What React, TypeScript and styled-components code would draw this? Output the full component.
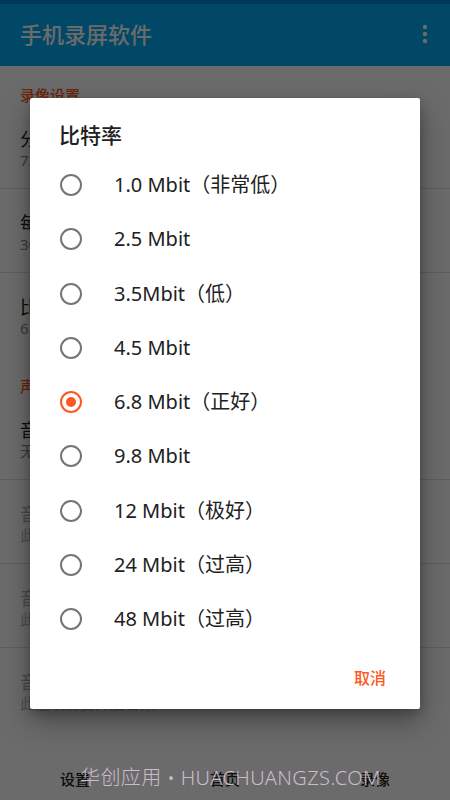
import React from "react";
import styled, { createGlobalStyle } from "styled-components";

const ACCENT = "#FF5722";
const FONT = '"Noto Sans", "Noto Sans CJK SC", sans-serif';

const GlobalStyle = createGlobalStyle`
  html, body { margin: 0; padding: 0; background: #fff; }
  body { font-family: ${FONT}; -webkit-font-smoothing: antialiased; }
  * { box-sizing: border-box; }
`;

const Screen = styled.div`
  position: relative;
  width: 450px;
  height: 800px;
  overflow: hidden;
  display: flex;
  flex-direction: column;
  background: #fff;
`;

const StatusBar = styled.div`
  height: 4px;
  flex: none;
  background: #0288d1;
`;

const AppBar = styled.header`
  height: 62px;
  flex: none;
  background: #03a9f4;
  display: flex;
  align-items: center;
  justify-content: space-between;
  padding: 0 16px 0 20px;
`;

const AppTitle = styled.h1`
  margin: 0;
  font-size: 22px;
  font-weight: 500;
  line-height: 28px;
  color: #fff;
  margin-top: -2px;
`;

const MoreButton = styled.div`
  width: 18px;
  height: 24px;
  display: flex;
  align-items: center;
  justify-content: center;
  margin-top: -3px;
`;

const Content = styled.main`
  flex: 1;
  overflow: hidden;
  display: flex;
  flex-direction: column;
`;

const SectionHeader = styled.div`
  height: 39px;
  flex: none;
  padding: 19px 20px 0;
  font-size: 15px;
  line-height: 20px;
  font-weight: 500;
  color: ${ACCENT};
`;

const Row = styled.div<{ $last?: boolean }>`
  height: 84px;
  flex: none;
  padding: 23px 20px 0;
  border-bottom: ${(p) => (p.$last ? "none" : "1px solid #e0e0e0")};
  display: flex;
  flex-direction: column;
`;

const RowTitle = styled.div<{ $disabled?: boolean }>`
  font-size: 18px;
  line-height: 22px;
  color: ${(p) => (p.$disabled ? "#b0b0b0" : "#212121")};
`;

const RowSub = styled.div<{ $disabled?: boolean }>`
  font-size: 15px;
  line-height: 20px;
  color: ${(p) => (p.$disabled ? "#b8b8b8" : "#8a8a8a")};
`;

const BottomNav = styled.nav`
  height: 48px;
  flex: none;
  padding-top: 6px;
  display: grid;
  grid-template-columns: repeat(3, 1fr);
  align-items: center;
  background: #fff;
`;

const NavItem = styled.div`
  text-align: center;
  font-size: 15px;
  line-height: 20px;
  font-weight: 500;
  color: #222;
`;

const Scrim = styled.div`
  position: absolute;
  inset: 0;
  background: rgba(0, 0, 0, 0.58);
  display: flex;
  align-items: flex-start;
  justify-content: center;
  padding-top: 98px;
`;

const Dialog = styled.div`
  width: 390px;
  background: #fff;
  border-radius: 2px;
  box-shadow: 0 12px 28px rgba(0, 0, 0, 0.35), 0 4px 10px rgba(0, 0, 0, 0.2);
  display: flex;
  flex-direction: column;
`;

const DialogTitle = styled.h2`
  margin: 0;
  height: 60px;
  padding: 23px 29px 0;
  font-size: 21px;
  line-height: 28px;
  font-weight: 500;
  color: #212121;
`;

const OptionList = styled.div`
  display: flex;
  flex-direction: column;
`;

const Option = styled.div`
  height: 54.25px;
  display: flex;
  align-items: center;
  padding-left: 30px;
  gap: 32px;
`;

const Radio = styled.span<{ $checked?: boolean }>`
  position: relative;
  width: 22px;
  height: 22px;
  flex: none;
  border-radius: 50%;
  border: 2px solid ${(p) => (p.$checked ? ACCENT : "#757575")};
  &::after {
    content: "";
    position: absolute;
    left: 50%;
    top: 50%;
    width: 10px;
    height: 10px;
    margin: -5px 0 0 -5px;
    border-radius: 50%;
    background: ${ACCENT};
    display: ${(p) => (p.$checked ? "block" : "none")};
  }
`;

const OptionLabel = styled.span`
  font-size: 20px;
  line-height: 26px;
  color: #212121;
`;

const ButtonBar = styled.div`
  height: 63px;
  display: flex;
  align-items: center;
  justify-content: flex-end;
  padding: 0 26px 0 0;
`;

const TextButton = styled.div`
  padding: 6px 8px;
  font-size: 16px;
  line-height: 22px;
  font-weight: 500;
  color: ${ACCENT};
`;

const Watermark = styled.div`
  position: absolute;
  left: 80px;
  top: 764px;
  font-size: 20px;
  line-height: 28px;
  font-weight: 300;
  letter-spacing: 0.4px;
  color: #cbbccb;
  white-space: nowrap;
  pointer-events: none;
`;

const options = [
  "1.0 Mbit（非常低）",
  "2.5 Mbit",
  "3.5Mbit（低）",
  "4.5 Mbit",
  "6.8 Mbit（正好）",
  "9.8 Mbit",
  "12 Mbit（极好）",
  "24 Mbit（过高）",
  "48 Mbit（过高）",
];

export default function App() {
  return (
    <>
      <GlobalStyle />
      <Screen>
        <StatusBar />
        <AppBar>
          <AppTitle>手机录屏软件</AppTitle>
          <MoreButton>
            <svg width="6" height="20" viewBox="0 0 6 20">
              <circle cx="3" cy="3" r="2.2" fill="#fff" />
              <circle cx="3" cy="10" r="2.2" fill="#fff" />
              <circle cx="3" cy="17" r="2.2" fill="#fff" />
            </svg>
          </MoreButton>
        </AppBar>
        <Content>
          <SectionHeader>录像设置</SectionHeader>
          <Row>
            <RowTitle>分辨率</RowTitle>
            <RowSub>720x1280</RowSub>
          </Row>
          <Row>
            <RowTitle>每秒帧数</RowTitle>
            <RowSub>30 FPS</RowSub>
          </Row>
          <Row $last>
            <RowTitle>比特率</RowTitle>
            <RowSub>6.8 Mbit（正好）</RowSub>
          </Row>
          <SectionHeader>声音设置</SectionHeader>
          <Row>
            <RowTitle>音频源</RowTitle>
            <RowSub>无</RowSub>
          </Row>
          <Row>
            <RowTitle $disabled>音频采样率</RowTitle>
            <RowSub $disabled>此选项需要开启音频</RowSub>
          </Row>
          <Row>
            <RowTitle $disabled>音频比特率</RowTitle>
            <RowSub $disabled>此选项需要开启音频</RowSub>
          </Row>
          <Row $last>
            <RowTitle $disabled>音频声道</RowTitle>
            <RowSub $disabled>此选项需要开启音频</RowSub>
          </Row>
          <SectionHeader>其他设置</SectionHeader>
        </Content>
        <BottomNav>
          <NavItem>设置</NavItem>
          <NavItem>首页</NavItem>
          <NavItem>录像</NavItem>
        </BottomNav>
        <Scrim>
          <Dialog>
            <DialogTitle>比特率</DialogTitle>
            <OptionList>
              {options.map((o, i) => (
                <Option key={o}>
                  <Radio $checked={i === 4} />
                  <OptionLabel>{o}</OptionLabel>
                </Option>
              ))}
            </OptionList>
            <ButtonBar>
              <TextButton>取消</TextButton>
            </ButtonBar>
          </Dialog>
        </Scrim>
        <Watermark>华创应用 • HUACHUANGZS.COM</Watermark>
      </Screen>
    </>
  );
}
